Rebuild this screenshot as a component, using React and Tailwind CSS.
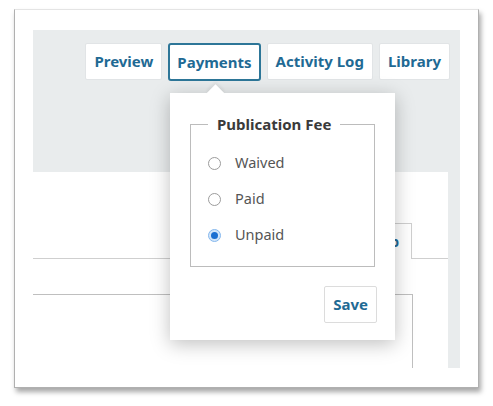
import React from 'react';

const font = { fontFamily: '"Noto Sans", "Open Sans", sans-serif' };

const HeaderButton = ({ label, active }) => (
  <button
    className={
      active
        ? 'h-[38px] px-[7px] bg-white border-2 border-[#2d7698] rounded-[3px] text-[15px] font-bold text-[#1f6a94]'
        : 'h-[37px] px-[8px] bg-white border border-[#e1e4e6] rounded-[2px] text-[15px] font-bold text-[#1f6a94]'
    }
  >
    {label}
  </button>
);

const Radio = ({ label, checked }) => (
  <label className="flex items-center h-[36px] gap-[14px] text-[14.5px] text-[#555]">
    {checked ? (
      <span className="w-[13px] h-[13px] rounded-full bg-[#d4e6f9] border border-[#86b8ee] flex items-center justify-center">
        <span className="w-[7px] h-[7px] rounded-full bg-[#1b6fd1]" />
      </span>
    ) : (
      <span className="w-[13px] h-[13px] rounded-full bg-white border border-[#9c9c9c]" />
    )}
    {label}
  </label>
);

export default function App() {
  return (
    <div className="relative w-[493px] h-[406px] bg-white overflow-hidden" style={font}>
      <div className="ml-[14px] mt-[9px] w-[465px] h-[379px] bg-white border border-[#b0b0b0] border-t-[#e4e4e4] shadow-[2px_4px_5px_rgba(0,0,0,0.35)] pl-[18px] pt-[20px] pr-[18px] pb-[19px]">
        <div className="w-full h-full bg-[#e9eced] flex flex-col overflow-hidden">
          <div className="h-[142px] flex justify-end items-start gap-[6px] pt-[13px] pr-[10px]">
            <HeaderButton label="Preview" />
            <HeaderButton label="Payments" active />
            <HeaderButton label="Activity Log" />
            <HeaderButton label="Library" />
          </div>
          <div className="flex-1 bg-white mr-[12px] flex flex-col">
            <div className="h-[87px] border-b border-[#cfcfcf] flex justify-end items-end pr-[36px]">
              <div className="h-[36px] px-[12px] border border-b-0 border-[#cfcfcf] bg-white -mb-px text-[14px] font-bold text-[#1f6a94] flex items-center">
                Help
              </div>
            </div>
            <div className="mt-[35px] mr-[35px] flex-1 border-t border-r border-[#bfbfbf]" />
          </div>
        </div>
      </div>

      <div className="absolute left-[170px] top-[93px] w-[225px] h-[247px] bg-white shadow-[0_4px_18px_rgba(0,0,0,0.25)] pt-[21px] px-[20px]">
        <span className="absolute left-[39px] -top-[6px] w-[13px] h-[13px] bg-white rotate-45 shadow-[-2px_-2px_3px_rgba(0,0,0,0.06)]" />
        <fieldset className="border border-[#bcbcbc] pl-[17px] pr-[10px] pb-[13px] h-[153px]">
          <legend className="px-[9px] text-[15px] font-bold text-[#3a3a3a] leading-[20px]">
            Publication Fee
          </legend>
          <div className="flex flex-col pt-[11px]">
            <Radio label="Waived" />
            <Radio label="Paid" />
            <Radio label="Unpaid" checked />
          </div>
        </fieldset>
        <div className="flex justify-end mt-[19px] -mr-[2px]">
          <button className="h-[37px] px-[8px] bg-white border border-[#dcdcdc] rounded-[2px] text-[15px] font-bold text-[#1f6a94]">
            Save
          </button>
        </div>
      </div>
    </div>
  );
}
